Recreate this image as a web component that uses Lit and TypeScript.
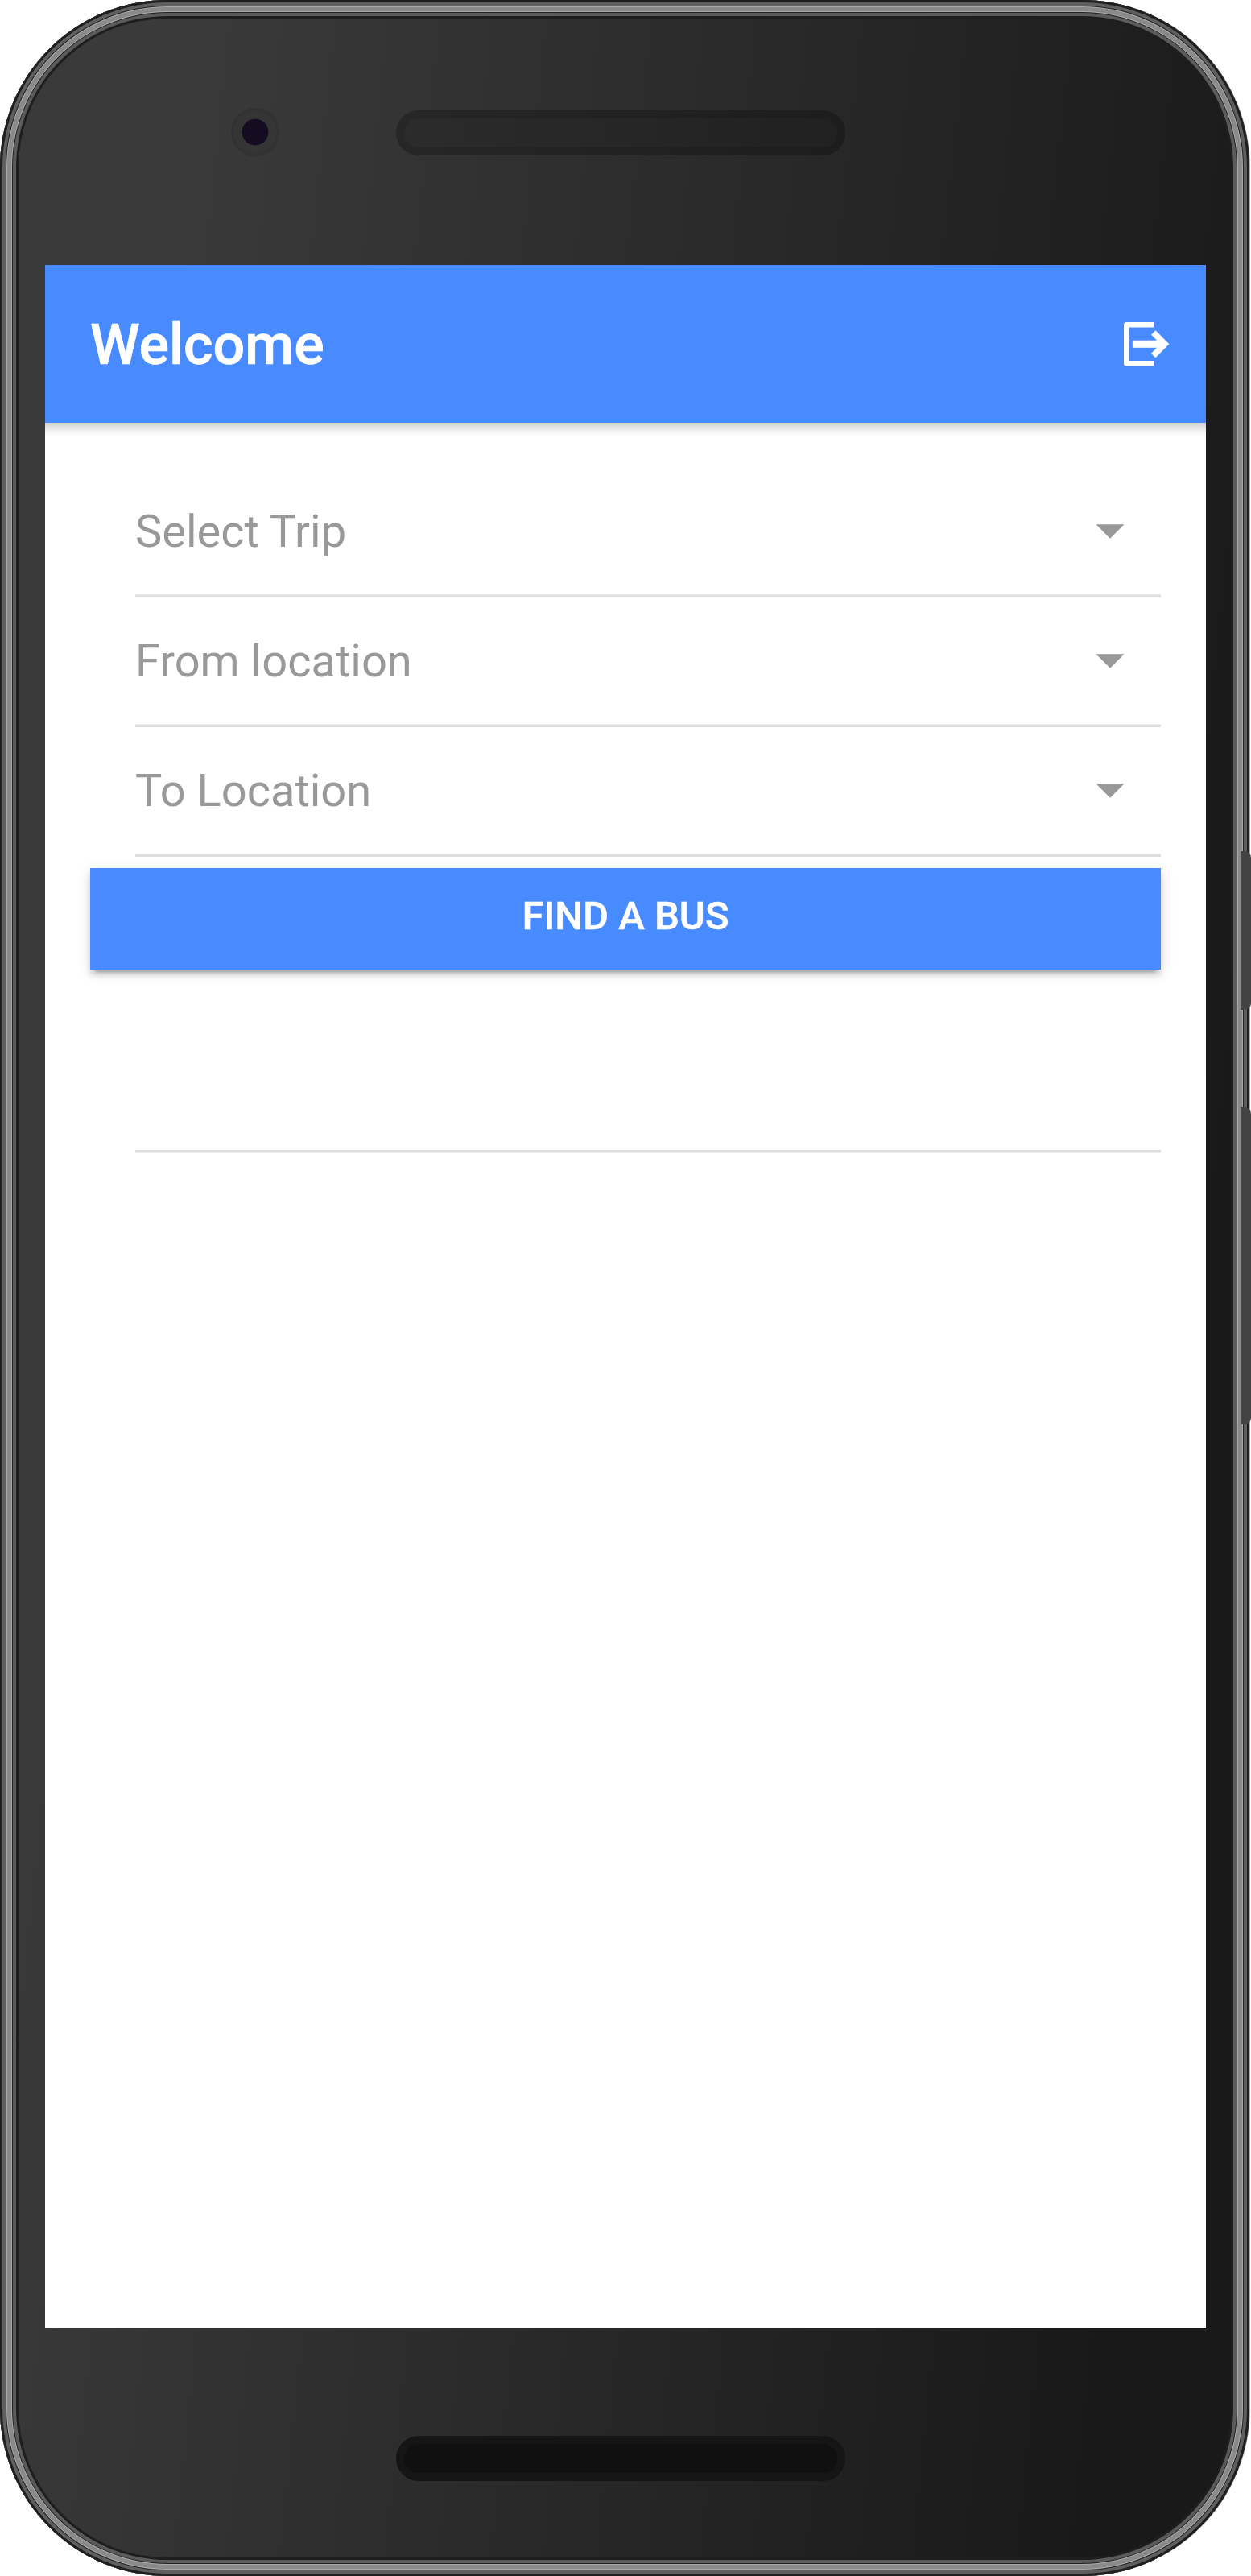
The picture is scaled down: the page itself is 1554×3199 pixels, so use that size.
import { LitElement, html, css, svg } from "lit";
import { customElement, property } from "lit/decorators.js";

@customElement("select-row")
class SelectRow extends LitElement {
  @property() label = "";

  static styles = css`
    :host {
      display: flex;
      align-items: center;
      box-sizing: border-box;
      height: 161px;
      margin-left: 56px;
      padding-right: 45.5px;
      border-bottom: 3px solid #dedede;
      box-shadow: inset 0 -1px 0 #efefef;
      color: #999;
    }
    .label {
      flex: 1;
      font-size: 56px;
      line-height: 66px;
      white-space: nowrap;
    }
    .arrow {
      width: 35px;
      height: 17.5px;
      background: #999;
      clip-path: polygon(0 0, 100% 0, 50% 100%);
    }
  `;

  render() {
    return html`<span class="label">${this.label}</span><span class="arrow"></span>`;
  }
}

const exitIcon = svg`
  <path d="M37 3.3H3.3v48H37" fill="none" stroke="#fff" stroke-width="6.6" stroke-linejoin="round"/>
  <path d="M11.2 23h30.5l-7.3-7.3 5-5.2L56 27.3 39.4 44l-5-5.2 7.3-7.3H11.2z" fill="#fff" stroke="#fff" stroke-width="0.6" stroke-linejoin="round"/>
`;

@customElement("app-root")
class AppRoot extends LitElement {
  static styles = css`
    :host {
      display: block;
      width: 1554px;
      height: 3199px;
      position: relative;
      overflow: hidden;
      background: #fff;
      font-family: Roboto, sans-serif;
    }
    .phone {
      box-sizing: border-box;
      width: 1552px;
      height: 3199px;
      border-radius: 208px;
      padding: 0 54px 0 56px;
      display: grid;
      grid-template-rows: 329px 2562px 308px;
      background: linear-gradient(96deg, #3a3a3a 230px, #191919 1660px);
      box-shadow:
        1px 0 0 #aaa,
        inset 0 0 0 3px #1f1f1f,
        inset 0 0 0 7px #5f5f5f,
        inset 0 0 0 8px #232323,
        inset 0 0 0 9px #aaa,
        inset 0 0 0 14px #8a8a8a,
        inset 0 0 0 15px #aaa,
        inset 0 0 0 16px #232323,
        inset 0 0 0 20px #5b5b5b,
        inset 0 0 0 23px #1e1e1e;
    }
    .top {
      display: flex;
      align-items: center;
      padding: 1px 0 0 231px;
    }
    .camera {
      box-sizing: border-box;
      width: 60px;
      height: 60px;
      border-radius: 50%;
      margin-bottom: 3px;
      border: 3px solid #323232;
      background: radial-gradient(circle, #160c22 16px, #353535 16.8px);
    }
    .speaker {
      box-sizing: border-box;
      width: 558px;
      height: 56px;
      border-radius: 28px;
      margin-left: 145px;
      border: 10px solid rgba(0, 0, 0, 0.12);
      background: rgba(0, 0, 0, 0.15);
    }
    .screen {
      background: #fff;
      display: flex;
      flex-direction: column;
    }
    .toolbar {
      height: 196px;
      background: #488aff;
      display: flex;
      align-items: center;
      justify-content: space-between;
      padding: 0 45px 0 56px;
      box-sizing: border-box;
      color: #fff;
    }
    .title {
      font-size: 70px;
      font-weight: 500;
      line-height: 82px;
      padding-top: 1px;
      -webkit-text-stroke: 0.7px #fff;
    }
    .exit {
      width: 57px;
      height: 55px;
    }
    .shade {
      height: 18px;
      margin-bottom: -18px;
      background: linear-gradient(#cfcfcf, #e6e6e6 35%, #f8f8f8 70%, #fff);
    }
    .content {
      padding: 56px;
    }
    .find {
      display: flex;
      align-items: center;
      justify-content: center;
      width: 100%;
      height: 126px;
      margin: 14px 0;
      padding: 0 0 7px;
      border: 0;
      background: #488aff;
      color: #fff;
      font: 500 49px/1 Roboto, sans-serif;
      -webkit-text-stroke: 0.5px #fff;
      box-shadow:
        0 10.5px 3.5px -7px rgba(0, 0, 0, 0.2),
        0 7px 7px rgba(0, 0, 0, 0.14),
        0 3.5px 17.5px rgba(0, 0, 0, 0.12);
    }
    .blank {
      box-sizing: border-box;
      height: 213px;
      margin-left: 56px;
      border-bottom: 3px solid #dedede;
      box-shadow: 0 1px 0 #efefef;
    }
    .bottom {
      display: flex;
      align-items: center;
      padding: 16px 0 0 436px;
    }
    .home {
      box-sizing: border-box;
      width: 558px;
      height: 56px;
      border-radius: 28px;
      border: 10px solid #151515;
      background: #101010;
    }
    .key {
      position: absolute;
      left: 1541px;
      width: 13px;
      border-radius: 0 8px 8px 0;
      background: #434343;
    }
    .power {
      top: 1057px;
      height: 197px;
    }
    .volume {
      top: 1375px;
      height: 394px;
    }
  `;

  render() {
    return html`
      <div class="phone">
        <div class="top">
          <div class="camera"></div>
          <div class="speaker"></div>
        </div>
        <div class="screen">
          <header class="toolbar">
            <span class="title">Welcome</span>
            <svg class="exit" viewBox="0 0 57 55">${exitIcon}</svg>
          </header>
          <div class="shade"></div>
          <main class="content">
            <select-row label="Select Trip"></select-row>
            <select-row label="From location"></select-row>
            <select-row label="To Location"></select-row>
            <button class="find">FIND A BUS</button>
            <div class="blank"></div>
          </main>
        </div>
        <div class="bottom"><div class="home"></div></div>
      </div>
      <div class="key power"></div>
      <div class="key volume"></div>
    `;
  }
}
